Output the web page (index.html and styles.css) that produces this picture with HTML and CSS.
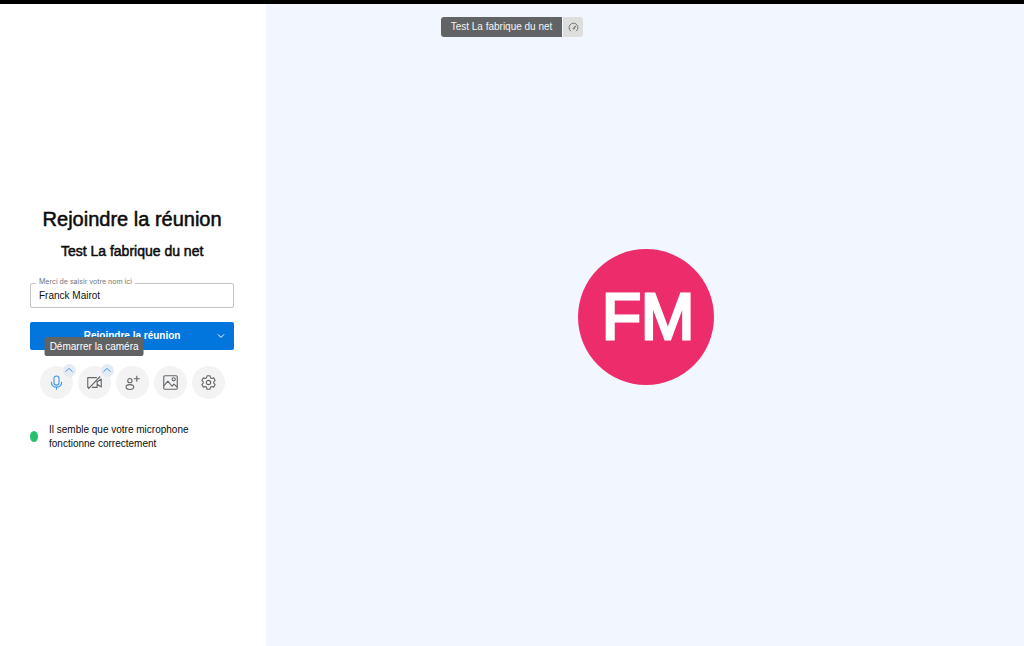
FILE: index.html
```html
<!DOCTYPE html>
<html lang="fr">
<head>
<meta charset="utf-8">
<meta name="viewport" content="width=device-width, initial-scale=1">
<title>Rejoindre la réunion</title>
<link rel="stylesheet" href="styles.css">
</head>
<body>
<div class="app">
  <header class="room-bar">
    <span class="room-name">Test La fabrique du net</span>
    <button class="room-quality" type="button" aria-label="Qualité de la connexion">
      <svg class="quality-icon" viewBox="0 0 12 12" aria-hidden="true"><path d="M3.2 10A4.8 4.8 0 1 1 8.8 10"/><path d="M5.4 7.2 8.3 4.2 6.6 7.8Z"/></svg>
    </button>
  </header>
  <main class="prejoin">
    <section class="panel">
      <h1 class="title">Rejoindre la réunion</h1>
      <h2 class="subtitle">Test La fabrique du net</h2>
      <form class="form">
        <div class="field">
          <label class="field-label" for="name">Merci de saisir votre nom ici</label>
          <input class="field-input" id="name" type="text" value="Franck Mairot">
        </div>
        <div class="join">
          <button class="join-button" type="button">Rejoindre la réunion</button>
          <button class="join-more" type="button" aria-label="Autres options">
            <svg class="chevron" viewBox="0 0 8 6" aria-hidden="true"><path d="M1 1.4 4 4.4 7 1.4"/></svg>
          </button>
        </div>
      </form>
      <div class="tools">
        <div class="tool">
          <button class="tool-button tool-active" type="button" aria-label="Microphone">
            <svg class="icon" viewBox="0 0 16 16" aria-hidden="true"><rect x="5.3" y="1" width="5.4" height="9.8" rx="2.7"/><path d="M2.6 7.2v.8a5.4 5 0 0 0 10.8 0v-.8M8 13v2.6"/></svg>
          </button>
          <button class="tool-menu" type="button" aria-label="Options du microphone"><svg class="chevron" viewBox="0 0 8 6" aria-hidden="true"><path d="M.4 4.8 4 1.4 7.6 4.8"/></svg></button>
        </div>
        <div class="tool">
          <button class="tool-button" type="button" aria-label="Caméra" aria-describedby="camera-tip">
            <svg class="icon" viewBox="0 0 16 16" aria-hidden="true"><path d="M10.6 2.8H.8v10.4h1.4M5.2 13.2h5.6V6.4M10.8 9.8l4.4 3V4.2l-4.4 3.2M1.4 14.8 14 1.6"/></svg>
          </button>
          <button class="tool-menu" type="button" aria-label="Options de la caméra"><svg class="chevron" viewBox="0 0 8 6" aria-hidden="true"><path d="M.4 4.8 4 1.4 7.6 4.8"/></svg></button>
          <span class="tooltip" id="camera-tip" role="tooltip">Démarrer la caméra</span>
        </div>
        <div class="tool">
          <button class="tool-button" type="button" aria-label="Inviter">
            <svg class="icon" viewBox="0 0 16 16" aria-hidden="true"><circle cx="5.2" cy="6" r="2.3"/><ellipse cx="5.2" cy="12.8" rx="4.1" ry="2.6"/><path d="M12.6.8v6.4M9.4 4h6.4"/></svg>
          </button>
        </div>
        <div class="tool">
          <button class="tool-button" type="button" aria-label="Arrière-plan">
            <svg class="icon" viewBox="0 0 16 16" aria-hidden="true"><rect x=".8" y=".8" width="14.4" height="14.4" rx="1.2"/><circle cx="11.4" cy="4.6" r="1.7"/><path d="m.8 11.6 4.4-5 4.4 5.4 2-2.2 3.6 3"/></svg>
          </button>
        </div>
        <div class="tool">
          <button class="tool-button" type="button" aria-label="Paramètres">
            <svg class="icon" viewBox="0 0 16 16" aria-hidden="true"><path d="M6.5.8h3l.6 2.1 1.3.8 2.1-.6 1.6 2.7-1.5 1.5v1.4l1.5 1.5-1.6 2.7-2.1-.6-1.3.8-.6 2.1h-3l-.6-2.1-1.3-.8-2.1.6-1.6-2.7 1.5-1.5V7.3L.9 5.8l1.6-2.7 2.1.6 1.3-.8z"/><circle cx="8" cy="8" r="2.3"/></svg>
          </button>
        </div>
      </div>
      <div class="status">
        <span class="status-dot"></span>
        <p class="status-text">Il semble que votre microphone fonctionne correctement</p>
      </div>
    </section>
    <section class="preview">
      <div class="avatar">FM</div>
    </section>
  </main>
</div>
</body>
</html>
```
FILE: styles.css
```css
* { box-sizing: border-box; }

body {
  margin: 0;
  font-family: "Liberation Sans", Arial, sans-serif;
  font-size: 10px;
  color: #0b0b0b;
  background: #fff;
}

button {
  margin: 0;
  padding: 0;
  border: 0;
  font: inherit;
  color: inherit;
  cursor: pointer;
}

svg {
  display: block;
  fill: none;
  stroke: currentColor;
}

.app {
  position: relative;
  display: flex;
  flex-direction: column;
  min-height: 100vh;
  border-top: 4px solid #000;
}

.room-bar {
  position: absolute;
  top: 13px;
  left: 0;
  right: 0;
  display: flex;
  justify-content: center;
  gap: 1px;
  height: 20px;
}

.room-name {
  padding: 0 10px;
  border-radius: 3px 0 0 3px;
  background: #626365;
  color: #f4f4f4;
  line-height: 20px;
}

.room-quality {
  display: grid;
  place-items: center;
  width: 20px;
  border-radius: 0 3px 3px 0;
  background: #dededc;
  color: #6b6b6b;
}

.quality-icon { width: 11px; height: 11px; }

.prejoin {
  flex: 1;
  display: grid;
  grid-template-columns: 26% 1fr;
}

.panel {
  display: flex;
  flex-direction: column;
  justify-content: center;
  padding: 5px 32px 0 30px;
}

.title, .subtitle {
  margin: 0;
  font-weight: 400;
  text-align: center;
  white-space: nowrap;
  -webkit-text-stroke: 0.5px currentColor;
}

.title { font-size: 20px; line-height: 28px; }

.subtitle {
  margin-top: 8px;
  font-size: 14px;
  line-height: 20px;
}

.form {
  display: flex;
  flex-direction: column;
  gap: 14px;
  margin-top: 22px;
}

.field { position: relative; }

.field-label {
  position: absolute;
  top: -6px;
  left: 6px;
  padding: 0 3px;
  background: #fff;
  color: #70757a;
  font-family: Inter, "Liberation Sans", sans-serif;
  font-size: 7px;
  line-height: 10px;
}

.field-input {
  display: block;
  width: 100%;
  height: 25px;
  padding: 0 8px;
  border: 1px solid #c4c4c4;
  border-radius: 2px;
  background: transparent;
  color: #111;
  font: inherit;
}

.join {
  display: flex;
  height: 28px;
  border-radius: 2px;
  background: #0376de;
  color: #fff;
}

.join-button {
  flex: 1;
  padding-left: 26px;
  background: transparent;
  font-weight: 700;
}

.join-more {
  display: grid;
  place-items: center;
  width: 26px;
  background: transparent;
}

.chevron { width: 8px; height: 6px; }

.tools {
  display: flex;
  justify-content: center;
  gap: 5px;
  margin-top: 16px;
}

.tool { position: relative; }

.tool-button {
  display: grid;
  place-items: center;
  width: 33px;
  height: 33px;
  border-radius: 50%;
  background: #f3f3f3;
  color: #65686b;
}

.tool-active { color: #3f97ee; }

.icon { width: 15px; height: 15px; stroke-width: 1.2; stroke-linejoin: round; }

.tool-menu {
  position: absolute;
  top: -2px;
  right: -3px;
  display: grid;
  place-items: center;
  width: 13px;
  height: 13px;
  border-radius: 50%;
  background: #e4ebf4;
  color: #3f97ee;
}

.tooltip {
  position: absolute;
  bottom: 43px;
  left: 50%;
  transform: translateX(-50%);
  padding: 0 5px;
  border-radius: 2px;
  background: #616264;
  color: #fff;
  line-height: 19px;
  white-space: nowrap;
}

.status {
  display: flex;
  align-items: center;
  gap: 11px;
  margin-top: 24px;
}

.status-dot {
  flex: none;
  width: 8px;
  height: 11px;
  border-radius: 50%;
  background: #25c16f;
}

.status-text {
  margin: 0;
  max-width: 150px;
  line-height: 14px;
}

.preview {
  display: grid;
  place-items: center;
  padding: 0 0 16px 2px;
  background: #f2f6fe;
}

.avatar {
  display: grid;
  place-items: center;
  width: 136px;
  height: 136px;
  padding-left: 4px;
  border-radius: 50%;
  background: #ed2d6b;
  color: #fff;
  font-size: 64px;
  line-height: 1;
  -webkit-text-stroke: 3px currentColor;
}
```
